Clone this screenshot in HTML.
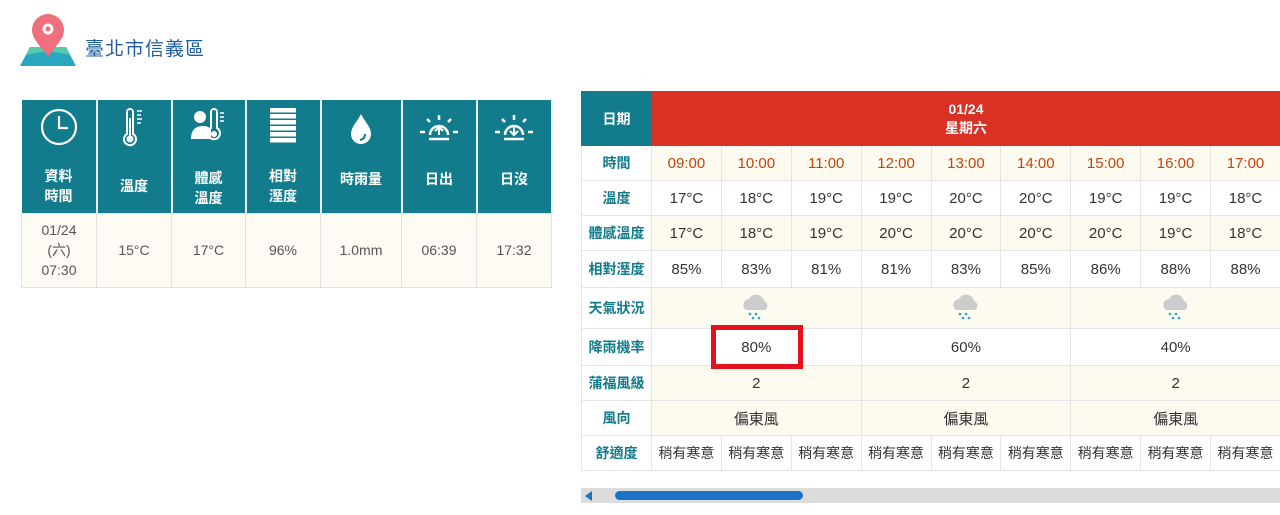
<!DOCTYPE html>
<html><head><meta charset="utf-8"><style>
*{margin:0;padding:0;box-sizing:border-box}
body{width:1280px;height:515px;background:#fff;font-family:"Liberation Sans","Noto Sans CJK TC",sans-serif;position:relative;overflow:hidden;color:#333}
.title{position:absolute;left:85px;top:34px;font-size:19px;color:#1f5e9c;letter-spacing:1px}
table{border-collapse:collapse;position:absolute;table-layout:fixed}
#lt{left:21px;top:100px;width:530px}
#lt th{background:#127b8c;color:#fff;font-size:14px;height:113px;border-right:2px solid #e7eef0;vertical-align:top;font-weight:bold;line-height:20px}
#lt th svg{display:block;margin:8px auto 0}
#lt td{background:#fdfbf3;height:74px;text-align:center;font-size:14px;color:#555;border:1px solid #e2e2e2;line-height:20px}
#rt{left:581px;top:91px;width:700px}
#rt td{text-align:center;font-size:15px;border:1px solid #e4e4e4;height:35px;color:#333}
#rt td.l{color:#127b8c;font-weight:bold;background:#fff;width:70px;font-size:14px}
#rt .c td{background:#fdfaf0}
#rt .c td.l{background:#fff}
#rt .t td{color:#c4440b}
#rt .t td.l{color:#127b8c}
#rt .s td{font-size:14px}
.box{position:absolute;left:711px;top:325px;width:92px;height:44px;border:5px solid #e3121d}
</style></head><body>
<svg style="position:absolute;left:20px;top:13px" width="56" height="54" viewBox="0 0 56 54">
<path d="M10 34 L46 34 L56 53 L0 53 Z" fill="#2aa7c0"/>
<path d="M6 42 Q28 36 50 42 L46 34 L10 34Z" fill="#55c9a8"/>
<path d="M28 44 C22 34 12 27 12 17 A16 16 0 0 1 44 17 C44 27 34 34 28 44Z" fill="#ef6f7c"/>
<circle cx="28" cy="16" r="5.5" fill="#fff"/><circle cx="28" cy="16" r="2.5" fill="#ef6f7c"/>
</svg>
<div class="title">臺北市信義區</div>
<table id="lt"><tr>
<th style="width:75px"><svg width="38" height="38" viewBox="0 0 38 38"><circle cx="19" cy="19" r="17" fill="none" stroke="#fff" stroke-width="2.2"/><path d="M19 8 V20 H28" fill="none" stroke="#fff" stroke-width="2.2"/></svg><div style="margin-top:20px">資料<br>時間</div></th>
<th style="width:75px"><svg width="26" height="40" viewBox="0 0 26 40"><path d="M6 4 a3 3 0 0 1 6 0 V26 a6 6 0 1 1 -6 0Z" fill="none" stroke="#fff" stroke-width="2"/><circle cx="9" cy="31" r="3.5" fill="#fff"/><rect x="8" y="10" width="2" height="20" fill="#fff"/><path d="M16 3h5M16 7h4M16 11h5M16 15h4" stroke="#fff" stroke-width="1.6"/></svg><div style="margin-top:28px">溫度</div></th>
<th style="width:74px"><svg width="36" height="36" viewBox="0 0 36 36"><circle cx="9" cy="9" r="6" fill="#fff"/><path d="M0 31 q0-13 12-13 q5 0 8 3 v10Z" fill="#fff"/><path d="M20 4 a3 3 0 0 1 6 0 V20 a6 6 0 1 1 -6 0Z" fill="none" stroke="#fff" stroke-width="2"/><circle cx="23" cy="26" r="3" fill="#fff"/><path d="M29 5h4M29 9h4M29 13h4" stroke="#fff" stroke-width="1.5"/></svg><div style="margin-top:24px">體感<br>溫度</div></th>
<th style="width:75px"><svg width="26" height="38" viewBox="0 0 26 38"><g fill="#fff"><rect y="0" width="26" height="4.5"/><rect y="6" width="26" height="4.5"/><rect y="12" width="26" height="4.5"/><rect y="18" width="26" height="4.5"/><rect y="24" width="26" height="4.5"/><rect y="30" width="26" height="4.5"/></g></svg><div style="margin-top:20px">相對<br>溼度</div></th>
<th style="width:81px"><svg width="26" height="34" viewBox="0 0 26 34" style="margin-top:12px"><path d="M13 2 C9 10 3 15 3 22 a10 10 0 0 0 20 0 C23 15 17 10 13 2Z" fill="#fff"/><path d="M17 22 q0 5 -5 6" stroke="#127b8c" stroke-width="2" fill="none"/></svg><div style="margin-top:23px">時雨量</div></th>
<th style="width:75px"><svg width="40" height="30" viewBox="0 0 40 30" style="margin-top:14px"><g stroke="#fff" stroke-width="2.5"><path d="M20 1v5M8 5l3 3M32 5l-3 3M1 18h5M34 18h5M10 25h20"/></g><path d="M11 21 a9 9 0 0 1 18 0" fill="none" stroke="#fff" stroke-width="2.5"/><path d="M20 21v-7M16 17l4-4 4 4" stroke="#fff" stroke-width="2" fill="none"/></svg><div style="margin-top:25px">日出</div></th>
<th style="width:75px"><svg width="40" height="30" viewBox="0 0 40 30" style="margin-top:14px"><g stroke="#fff" stroke-width="2.5"><path d="M20 1v5M8 5l3 3M32 5l-3 3M1 18h5M34 18h5M10 25h20"/></g><path d="M11 21 a9 9 0 0 1 18 0" fill="none" stroke="#fff" stroke-width="2.5"/><path d="M20 13v7M16 17l4 4 4-4" stroke="#fff" stroke-width="2" fill="none"/></svg><div style="margin-top:25px">日沒</div></th>
</tr><tr><td>01/24<br>(六)<br>07:30</td><td>15°C</td><td>17°C</td><td>96%</td><td>1.0mm</td><td>06:39</td><td>17:32</td></tr></table>

<table id="rt">
<tr><td class="l" style="background:#127b8c;color:#fff;height:54px;border-color:#127b8c">日期</td><td colspan="9" style="background:#d93123;color:#fff;font-weight:bold;border-color:#d93123;line-height:19px;font-size:14px">01/24<br>星期六</td></tr>
<tr class="c t"><td class="l">時間</td><td>09:00</td><td>10:00</td><td>11:00</td><td>12:00</td><td>13:00</td><td>14:00</td><td>15:00</td><td>16:00</td><td>17:00</td></tr>
<tr><td class="l">溫度</td><td>17°C</td><td>18°C</td><td>19°C</td><td>19°C</td><td>20°C</td><td>20°C</td><td>19°C</td><td>19°C</td><td>18°C</td></tr>
<tr class="c"><td class="l">體感溫度</td><td>17°C</td><td>18°C</td><td>19°C</td><td>20°C</td><td>20°C</td><td>20°C</td><td>20°C</td><td>19°C</td><td>18°C</td></tr>
<tr><td class="l" style="height:37px">相對溼度</td><td>85%</td><td>83%</td><td>81%</td><td>81%</td><td>83%</td><td>85%</td><td>86%</td><td>88%</td><td>88%</td></tr>
<tr class="c"><td class="l" style="height:41px">天氣狀況</td>
<td colspan="3"><svg width="32" height="28" viewBox="0 0 32 28"><path d="M6 18 a6 6 0 0 1 3-11 a8 8 0 0 1 15 2 a5 5 0 0 1 1 9Z" fill="#ccc"/><g fill="#2aa7c0"><circle cx="10" cy="22" r="1.3"/><circle cx="16" cy="22" r="1.3"/><circle cx="13" cy="26" r="1.3"/><circle cx="19" cy="26" r="1.3"/></g></svg></td>
<td colspan="3"><svg width="32" height="28" viewBox="0 0 32 28"><path d="M6 18 a6 6 0 0 1 3-11 a8 8 0 0 1 15 2 a5 5 0 0 1 1 9Z" fill="#ccc"/><g fill="#2aa7c0"><circle cx="10" cy="22" r="1.3"/><circle cx="16" cy="22" r="1.3"/><circle cx="13" cy="26" r="1.3"/><circle cx="19" cy="26" r="1.3"/></g></svg></td>
<td colspan="3"><svg width="32" height="28" viewBox="0 0 32 28"><path d="M6 18 a6 6 0 0 1 3-11 a8 8 0 0 1 15 2 a5 5 0 0 1 1 9Z" fill="#ccc"/><g fill="#2aa7c0"><circle cx="10" cy="22" r="1.3"/><circle cx="16" cy="22" r="1.3"/><circle cx="13" cy="26" r="1.3"/><circle cx="19" cy="26" r="1.3"/></g></svg></td></tr>
<tr><td class="l" style="height:37px">降雨機率</td><td colspan="3">80%</td><td colspan="3">60%</td><td colspan="3">40%</td></tr>
<tr class="c"><td class="l">蒲福風級</td><td colspan="3">2</td><td colspan="3">2</td><td colspan="3">2</td></tr>
<tr class="c"><td class="l">風向</td><td colspan="3">偏東風</td><td colspan="3">偏東風</td><td colspan="3">偏東風</td></tr>
<tr class="s"><td class="l">舒適度</td><td>稍有寒意</td><td>稍有寒意</td><td>稍有寒意</td><td>稍有寒意</td><td>稍有寒意</td><td>稍有寒意</td><td>稍有寒意</td><td>稍有寒意</td><td>稍有寒意</td></tr>
</table>
<div class="box"></div>
<div style="position:absolute;left:581px;top:488px;width:699px;height:15px;background:#dcdcdc"></div>
<div style="position:absolute;left:585px;top:491px;width:0;height:0;border-top:5px solid transparent;border-bottom:5px solid transparent;border-right:7px solid #1a73c6"></div>
<div style="position:absolute;left:615px;top:491px;width:188px;height:9px;background:#1a73c6;border-radius:5px"></div>
</body></html>
